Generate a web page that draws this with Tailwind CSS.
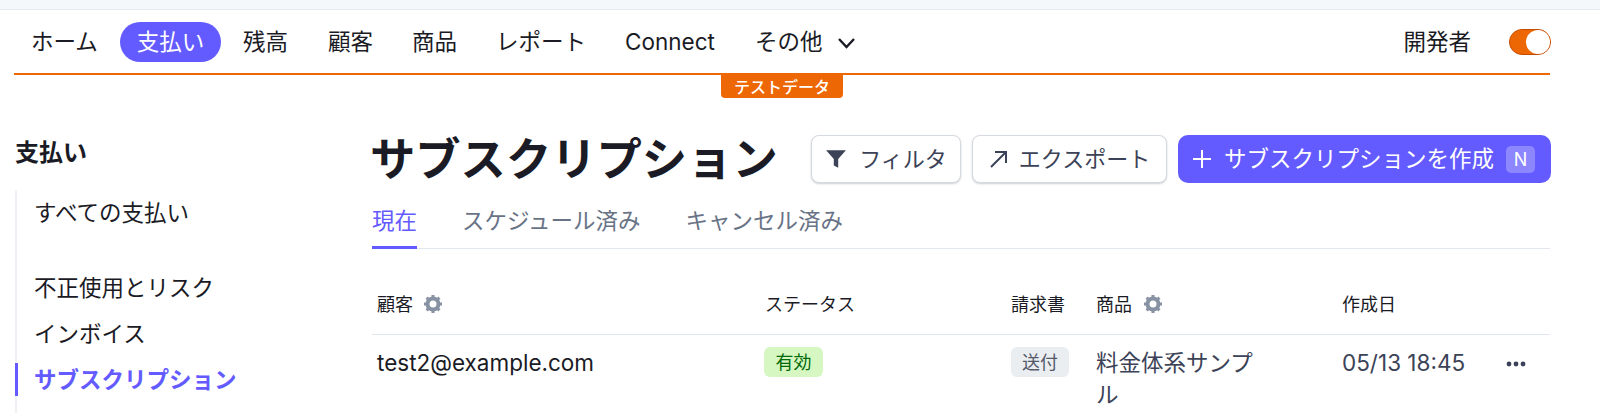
<!DOCTYPE html>
<html lang="ja">
<head>
  <meta charset="UTF-8" />
  <title>サブスクリプション</title>
  <script src="https://cdn.jsdelivr.net/npm/@tailwindcss/browser@4"></script>
</head>
<body class="bg-white text-[#1a1b25] font-['Inter','Noto_Sans_CJK_JP',sans-serif] overflow-hidden">
  <!-- Browser strip -->
  <div class="h-[10px] bg-[#f5f8fa] border-b border-[#e6ebf1]"></div>

  <!-- Top nav -->
  <nav class="ml-[14px] mr-[50px] h-[65px] border-b-2 border-[#ed6704] flex items-center text-[22.5px]">
    <a class="ml-[17px] w-[89px]">ホーム</a>
    <a class="w-[101px] h-[40px] rounded-[20px] bg-[#635bff] text-white flex items-center justify-center">支払い</a>
    <a class="ml-[22px] w-[85px]">残高</a>
    <a class="w-[84px]">顧客</a>
    <a class="w-[84px]">商品</a>
    <a class="w-[129px]">レポート</a>
    <a class="w-[130px]">Connect</a>
    <a class="flex items-center">その他
      <svg class="ml-[14px] mt-[2px]" width="19" height="12" viewBox="0 0 19 12" fill="none" stroke="#1a1b25" stroke-width="2.4"><path d="M2 2l7.500 8L17 2" /></svg>
    </a>
    <a class="ml-auto mr-[38px]">開発者</a>
    <span class="w-[42px] h-[26px] mr-[-1px] rounded-full bg-[#ed6704] border border-[#c44c00] flex justify-end">
      <span class="w-[24px] h-[24px] rounded-full bg-white"></span>
    </span>
  </nav>

  <!-- Test data badge -->
  <div class="flex justify-center">
    <span class="ml-[-36px] w-[122px] h-[23px] bg-[#ed6704] rounded-b-[4px] text-white text-[16px] font-medium flex items-center justify-center">テストデータ</span>
  </div>

  <div class="flex">
    <!-- Sidebar -->
    <aside class="w-[372px] shrink-0 pl-[15px] pt-[37px]">
      <h2 class="text-[24px] font-bold leading-[36px]">支払い</h2>
      <ul class="mt-[23px] border-l-2 border-[#eef1f5] text-[22.5px] h-[240px]">
        <li class="pl-[17px] h-[46px] flex items-center mt-[-4px]">すべての支払い</li>
        <li class="pl-[17px] h-[46px] flex items-center mt-[29px]">不正使用とリスク</li>
        <li class="pl-[17px] h-[46px] flex items-center">インボイス</li>
        <li class="pl-[16px] h-[33px] flex items-center mt-[6px] ml-[-2px] border-l-[3px] border-[#635bff] text-[#635bff] font-bold">サブスクリプション</li>
      </ul>
    </aside>

    <!-- Content -->
    <main class="w-[1179px]">
      <div class="flex items-center pt-[36px]">
        <h1 class="ml-[-2px] text-[45.3px] font-bold leading-[52px]">サブスクリプション</h1>
        <div class="ml-auto mb-[2px] flex items-center gap-[11px] text-[22px] text-[#3c4257]">
          <button class="h-[48px] w-[150px] rounded-[8px] bg-white border border-[#d5d9e0] shadow-[0_1px_2px_rgba(60,66,87,0.25)] flex items-center justify-center gap-[12px]">
            <svg width="22" height="22" viewBox="0 0 20 20" fill="#3c4257"><path d="M1 2h18l-7 8v8l-4-2v-6z" /></svg>
            フィルタ
          </button>
          <button class="h-[48px] w-[195px] rounded-[8px] bg-white border border-[#d5d9e0] shadow-[0_1px_2px_rgba(60,66,87,0.25)] flex items-center justify-center gap-[10px]">
            <svg width="20" height="20" viewBox="0 0 20 20" fill="none" stroke="#3c4257" stroke-width="2"><path d="M2 18L17 3M6 3h11v11" /></svg>
            エクスポート
          </button>
          <button class="h-[48px] w-[373px] rounded-[10px] bg-[#635bff] text-white text-[22.5px] flex items-center pl-[14px]">
            <svg width="20" height="20" viewBox="0 0 20 20" fill="none" stroke="white" stroke-width="2"><path d="M10 1v18M1 10h18" /></svg>
            <span class="ml-[12px]">サブスクリプションを作成</span>
            <span class="ml-[12px] w-[29px] h-[27px] rounded-[5px] bg-[#8d87ff] text-[18px] flex items-center justify-center">N</span>
          </button>
        </div>
      </div>

      <!-- Tabs -->
      <div class="mt-[12px] mr-[1px] flex gap-[45px] border-b border-[#e3e8ee] text-[22.5px] text-[#697386] h-[51px]">
        <a class="h-[51px] w-[45px] border-b-[3px] border-[#635bff] text-[#635bff] pt-[6px]">現在</a>
        <a class="pt-[6px]">スケジュール済み</a>
        <a class="pt-[6px]">キャンセル済み</a>
      </div>

      <!-- Table -->
      <div class="mr-[1px] grid grid-cols-[388px_246px_85px_246px_165px_48px]">
        <div class="h-[86px] pl-[5px] flex items-end pb-[16px] text-[18px] border-b border-[#e3e8ee]">顧客
          <svg class="ml-[10px] mb-[4px]" width="20" height="20" viewBox="0 0 20 20" fill="none" stroke="#8792a2"><circle cx="10" cy="10" r="5.500" stroke-width="4" /><path stroke-width="3" d="M10 1v4M10 15v4M1 10h4M15 10h4M3.600 3.600l2.800 2.800M13.600 13.600l2.800 2.800M3.600 16.400l2.800-2.800M13.600 6.400l2.800-2.800" /></svg>
        </div>
        <div class="h-[86px] pl-[5px] flex items-end pb-[16px] text-[18px] border-b border-[#e3e8ee]">ステータス</div>
        <div class="h-[86px] pl-[5px] flex items-end pb-[16px] text-[18px] border-b border-[#e3e8ee]">請求書</div>
        <div class="h-[86px] pl-[5px] flex items-end pb-[16px] text-[18px] border-b border-[#e3e8ee]">商品
          <svg class="ml-[11px] mb-[4px]" width="20" height="20" viewBox="0 0 20 20" fill="none" stroke="#8792a2"><circle cx="10" cy="10" r="5.500" stroke-width="4" /><path stroke-width="3" d="M10 1v4M10 15v4M1 10h4M15 10h4M3.600 3.600l2.800 2.800M13.600 13.600l2.800 2.800M3.600 16.400l2.800-2.800M13.600 6.400l2.800-2.800" /></svg>
        </div>
        <div class="h-[86px] pl-[5px] flex items-end pb-[16px] text-[18px] border-b border-[#e3e8ee]">作成日</div>
        <div class="h-[86px] border-b border-[#e3e8ee]"></div>

        <div class="pl-[5px] pt-[12px] text-[22.5px] leading-[32px]">test2@example.com</div>
        <div class="pl-[4px] pt-[12px]"><span class="inline-flex items-center justify-center w-[59px] h-[30px] rounded-[6px] bg-[#d7f7c2] text-[#006908] text-[18px]">有効</span></div>
        <div class="pl-[5px] pt-[12px]"><span class="inline-flex items-center justify-center w-[58px] h-[30px] rounded-[6px] bg-[#ebeef1] text-[#545969] text-[18px]">送付</span></div>
        <div class="pl-[5px] pt-[12px] pr-[70px] text-[22.5px] leading-[32px] text-[#3c4257]">料金体系サンプル</div>
        <div class="pl-[5px] pt-[12px] text-[22.5px] leading-[32px] text-[#3c4257] whitespace-nowrap">05/13 18:45</div>
        <div class="pt-[26px] pl-[4px]">
          <svg width="20" height="6" viewBox="0 0 20 6" fill="#3c4257"><circle cx="3" cy="3" r="2.400" /><circle cx="10" cy="3" r="2.400" /><circle cx="17" cy="3" r="2.400" /></svg>
        </div>
      </div>
    </main>
  </div>
</body>
</html>
